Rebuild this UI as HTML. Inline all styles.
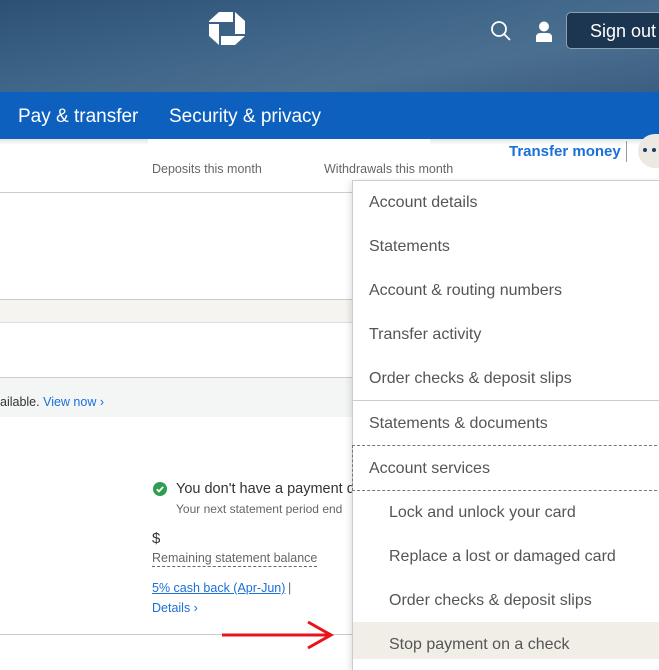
<!DOCTYPE html>
<html><head><meta charset="utf-8"><style>
*{margin:0;padding:0;box-sizing:border-box}
body{width:659px;height:659px;overflow:hidden;position:relative;background:#fff;font-family:"Liberation Sans",sans-serif;color:#555}
.a{position:absolute}
.hdr{left:0;top:0;width:659px;height:92px;background:linear-gradient(170deg,#2b5073 0%,#3e6588 40%,#4b6f8f 70%,#3b5e82 100%)}
.nav{left:0;top:92px;width:659px;height:47px;background:#0d60bd}
.nav span{position:absolute;top:14px;color:#fff;font-size:19px}
.ln{height:1px;background:#ccc;left:0}
.mi{position:absolute;left:369px;font-size:16px;color:#555;white-space:nowrap}
.si{left:389px}
</style></head><body>
<div class="a hdr"></div>
<svg class="a" style="left:209px;top:12px" width="36" height="33" viewBox="0 0 36 33" fill="#fff">
<polygon points="0,9 10,0 24,0 24,10 0,10"/>
<polygon points="26,0 36,9 36,22 26,22"/>
<polygon points="36,24 26,33 12,33 12,24"/>
<polygon points="10,33 0,24 0,12 10,12"/>
</svg>
<svg class="a" style="left:490px;top:20px" width="22" height="22" viewBox="0 0 22 22"><circle cx="9" cy="9" r="7" fill="none" stroke="#fff" stroke-width="1.8"/><path d="M14 14 L20 20" stroke="#fff" stroke-width="1.8"/></svg>
<svg class="a" style="left:535px;top:21px" width="18" height="21" viewBox="0 0 18 21"><circle cx="9" cy="5.5" r="5" fill="#fff"/><path d="M1 21 V16 Q1 12 6 12 H12 Q17 12 17 16 V21Z" fill="#fff"/></svg>
<div class="a" style="left:566px;top:12px;width:100px;height:37px;border:1px solid #8aa0b5;border-radius:5px;background:#1c3550"></div>
<div class="a" style="left:590px;top:21px;color:#fff;font-size:18px">Sign out</div>
<div class="a nav"><span style="left:18px">Pay &amp; transfer</span><span style="left:169px">Security &amp; privacy</span></div>
<div class="a" style="left:0;top:139px;width:659px;height:6px;background:linear-gradient(#e4e4e4,#fff)"></div>
<div class="a" style="left:148px;top:139px;width:282px;height:6px;background:#fff"></div>
<div class="a" style="left:152px;top:162px;font-size:12.5px;color:#666">Deposits this month</div>
<div class="a" style="left:324px;top:162px;font-size:12.5px;color:#666">Withdrawals this month</div>
<div class="a" style="left:509px;top:143px;font-size:15px;color:#1a6fd8;font-weight:bold">Transfer money</div>
<div class="a" style="left:626px;top:141px;width:1px;height:21px;background:#999"></div>
<div class="a" style="left:638px;top:134px;width:40px;height:34px;border-radius:17px;background:#ece9e3"></div>
<div class="a" style="left:643px;top:148px;width:4px;height:4px;border-radius:2px;background:#1c3a66"></div>
<div class="a" style="left:652px;top:148px;width:4px;height:4px;border-radius:2px;background:#1c3a66"></div>
<div class="a ln" style="top:192px;width:352px"></div>
<div class="a ln" style="top:299px;width:352px"></div>
<div class="a" style="left:0;top:300px;width:352px;height:22px;background:#f5f4f0"></div>
<div class="a ln" style="top:322px;width:352px;background:#ddd"></div>
<div class="a ln" style="top:377px;width:352px"></div>
<div class="a" style="left:0;top:378px;width:352px;height:39px;background:#f4f5f5"></div>
<div class="a" style="left:0;top:395px;font-size:12.5px;color:#333">ailable. <span style="color:#1a6fd8">View now &#8250;</span></div>
<svg class="a" style="left:153px;top:482px" width="14" height="14" viewBox="0 0 14 14"><circle cx="7" cy="7" r="7" fill="#2e9d4f"/><path d="M3.8 7.2 L6 9.4 L10.2 4.8" stroke="#fff" stroke-width="1.8" fill="none"/></svg>
<div class="a" style="left:176px;top:481px;font-size:14.5px;color:#333;white-space:nowrap">You don't have a payment d</div>
<div class="a" style="left:176px;top:502px;font-size:12px;color:#666;white-space:nowrap">Your next statement period end</div>
<div class="a" style="left:152px;top:530px;font-size:15px;color:#333">$</div>
<div class="a" style="left:152px;top:551px;font-size:12.5px;color:#666;border-bottom:1px dashed #666;padding-bottom:1px">Remaining statement balance</div>
<div class="a" style="left:152px;top:581px;font-size:12.5px;color:#1a6fd8;text-decoration:underline">5% cash back (Apr-Jun)</div>
<div class="a" style="left:288px;top:581px;font-size:12.5px;color:#666">|</div>
<div class="a" style="left:152px;top:601px;font-size:12.5px;color:#1a6fd8">Details &#8250;</div>
<div class="a ln" style="top:634px;width:352px"></div>
<svg class="a" style="left:220px;top:620px" width="115" height="30" viewBox="0 0 115 30"><path d="M2 15 H110 M88 2 L111 15 L88 28" stroke="#e8141c" stroke-width="3" fill="none"/></svg>
<div class="a" style="left:352px;top:180px;width:320px;height:490px;background:#fff;border-left:1px solid #ccc;border-top:1px solid #ccc;box-shadow:-2px 2px 6px rgba(0,0,0,.12)"></div>
<div class="a" style="left:353px;top:622px;width:306px;height:37px;background:#f1eee8"></div>
<div class="a" style="left:353px;top:400px;width:306px;height:1px;background:#ccc"></div>
<div class="a" style="left:352px;top:445px;width:310px;height:46px;border:1px dashed #777;border-right:none"></div>
<div class="mi" style="top:194px">Account details</div>
<div class="mi" style="top:238px">Statements</div>
<div class="mi" style="top:282px">Account &amp; routing numbers</div>
<div class="mi" style="top:326px">Transfer activity</div>
<div class="mi" style="top:370px">Order checks &amp; deposit slips</div>
<div class="mi" style="top:415px">Statements &amp; documents</div>
<div class="mi" style="top:460px">Account services</div>
<div class="mi si" style="top:504px">Lock and unlock your card</div>
<div class="mi si" style="top:548px">Replace a lost or damaged card</div>
<div class="mi si" style="top:592px">Order checks &amp; deposit slips</div>
<div class="mi si" style="top:636px">Stop payment on a check</div>
</body></html>
